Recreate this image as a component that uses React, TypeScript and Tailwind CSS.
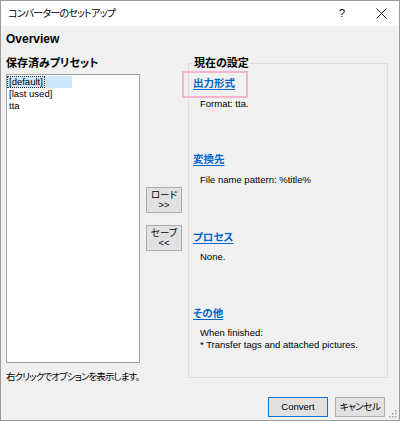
import React from "react";

function SizeGrip() {
  return (
    <svg width="8" height="8" viewBox="0 0 8 8" className="absolute right-[2px] bottom-[2px]">
      <rect x="6" y="0" width="1.5" height="1.5" fill="#a0a0a0" />
      <rect x="3" y="3" width="1.5" height="1.5" fill="#a0a0a0" />
      <rect x="6" y="3" width="1.5" height="1.5" fill="#a0a0a0" />
      <rect x="0" y="6" width="1.5" height="1.5" fill="#a0a0a0" />
      <rect x="3" y="6" width="1.5" height="1.5" fill="#a0a0a0" />
      <rect x="6" y="6" width="1.5" height="1.5" fill="#a0a0a0" />
    </svg>
  );
}

function SideButton({ top, bottom }: { top: string; bottom: string }) {
  return (
    <button className="w-[36px] h-[26px] bg-[#e1e1e1] border border-[#adadad] flex flex-col items-center justify-center text-[9.5px] leading-[10px] text-black">
      <span>{top}</span>
      <span>{bottom}</span>
    </button>
  );
}

function LinkHead({ children }: { children: React.ReactNode }) {
  return (
    <div className="pl-[4px] h-[14px] leading-[14px]">
      <span className="text-[10.5px] font-bold text-[#0066cc] underline underline-offset-[2px]">{children}</span>
    </div>
  );
}

export default function App() {
  return (
    <div className="relative w-[400px] h-[421px] bg-[#f0f0f0] border border-[#9a9a9a] flex flex-col text-black font-['Liberation_Sans','Noto_Sans_CJK_JP',sans-serif] [font-feature-settings:'palt']">
      {/* Title bar */}
      <div className="h-[25px] bg-white flex items-center pl-[7px] shrink-0">
        <span className="text-[10px] tracking-[-0.8px]">コンバーターのセットアップ</span>
        <div className="ml-auto flex items-center">
          <span className="text-[11px] w-[20px] text-center mr-[24px]">?</span>
          <svg width="11" height="11" viewBox="0 0 11 11" className="mr-[12px]">
            <path d="M0.5 0.5 L10.5 10.5 M10.5 0.5 L0.5 10.5" stroke="#222" strokeWidth="1" />
          </svg>
        </div>
      </div>

      {/* Body */}
      <div className="flex-1 flex flex-col pl-[5px]">
        <div className="mt-[6px] h-[14px] leading-[14px] text-[12px] font-bold">Overview</div>

        <div className="mt-[10px] h-[328px] flex">
          {/* Left column */}
          <div className="w-[134px] flex flex-col">
            <div className="h-[14px] leading-[14px] text-[11px] font-bold">保存済みプリセット</div>
            <div className="mt-[4px] h-[289px] bg-white border border-[#a0a0a0] pt-[1px] text-[9.5px] leading-[12px]">
              <div className="w-[65px] h-[12px] bg-[#cce8ff] flex">
                <span className="border border-dotted border-[#333] leading-[10px] px-[1px]">[default]</span>
              </div>
              <div className="pl-[2px]">[last used]</div>
              <div className="pl-[2px]">tta</div>
            </div>
            <div className="mt-[8px] h-[12px] leading-[12px] text-[9.5px] whitespace-nowrap tracking-[-0.9px]">右クリックでオプションを表示します。</div>
          </div>

          {/* Middle buttons */}
          <div className="ml-[6px] w-[36px] flex flex-col">
            <div className="mt-[131px]">
              <SideButton top="ロード" bottom=">>" />
            </div>
            <div className="mt-[12px]">
              <SideButton top="セーブ" bottom="<<" />
            </div>
          </div>

          {/* Right group */}
          <div className="ml-[6px] w-[200px]">
            <fieldset className="h-[322px] border border-[#dcdcdc] px-0">
              <legend className="ml-[4px] px-[1px] text-[11px] font-bold leading-[14px]">現在の設定</legend>
              <div className="text-[9.5px] leading-[12px]">
                <div className="mt-[6px] relative">
                  <LinkHead>出力形式</LinkHead>
                  <div className="absolute left-[-7px] top-[-5px] w-[66px] h-[27px] border-[2px] border-[#f4b4cc]"></div>
                </div>
                <div className="mt-[8px] pl-[11px]">Format: tta.</div>

                <div className="mt-[42px]">
                  <LinkHead>変換先</LinkHead>
                </div>
                <div className="mt-[8px] pl-[11px]">File name pattern: %title%</div>

                <div className="mt-[44px]">
                  <LinkHead>プロセス</LinkHead>
                </div>
                <div className="mt-[7px] pl-[11px]">None.</div>

                <div className="mt-[43px]">
                  <LinkHead>その他</LinkHead>
                </div>
                <div className="mt-[7px] pl-[11px]">When finished:</div>
                <div className="pl-[11px]">* Transfer tags and attached pictures.</div>
              </div>
            </fieldset>
          </div>
        </div>

        {/* Footer */}
        <div className="mt-[13px] flex justify-end pr-[14px] gap-[7px]">
          <button className="w-[60px] h-[20px] bg-[#e1e1e1] border border-[#0078d7] text-[9.5px] leading-[18px]">Convert</button>
          <button className="w-[50px] h-[20px] bg-[#e1e1e1] border border-[#adadad] text-[9.5px] leading-[18px] tracking-[-0.5px]">キャンセル</button>
        </div>
      </div>

      <SizeGrip />
    </div>
  );
}
